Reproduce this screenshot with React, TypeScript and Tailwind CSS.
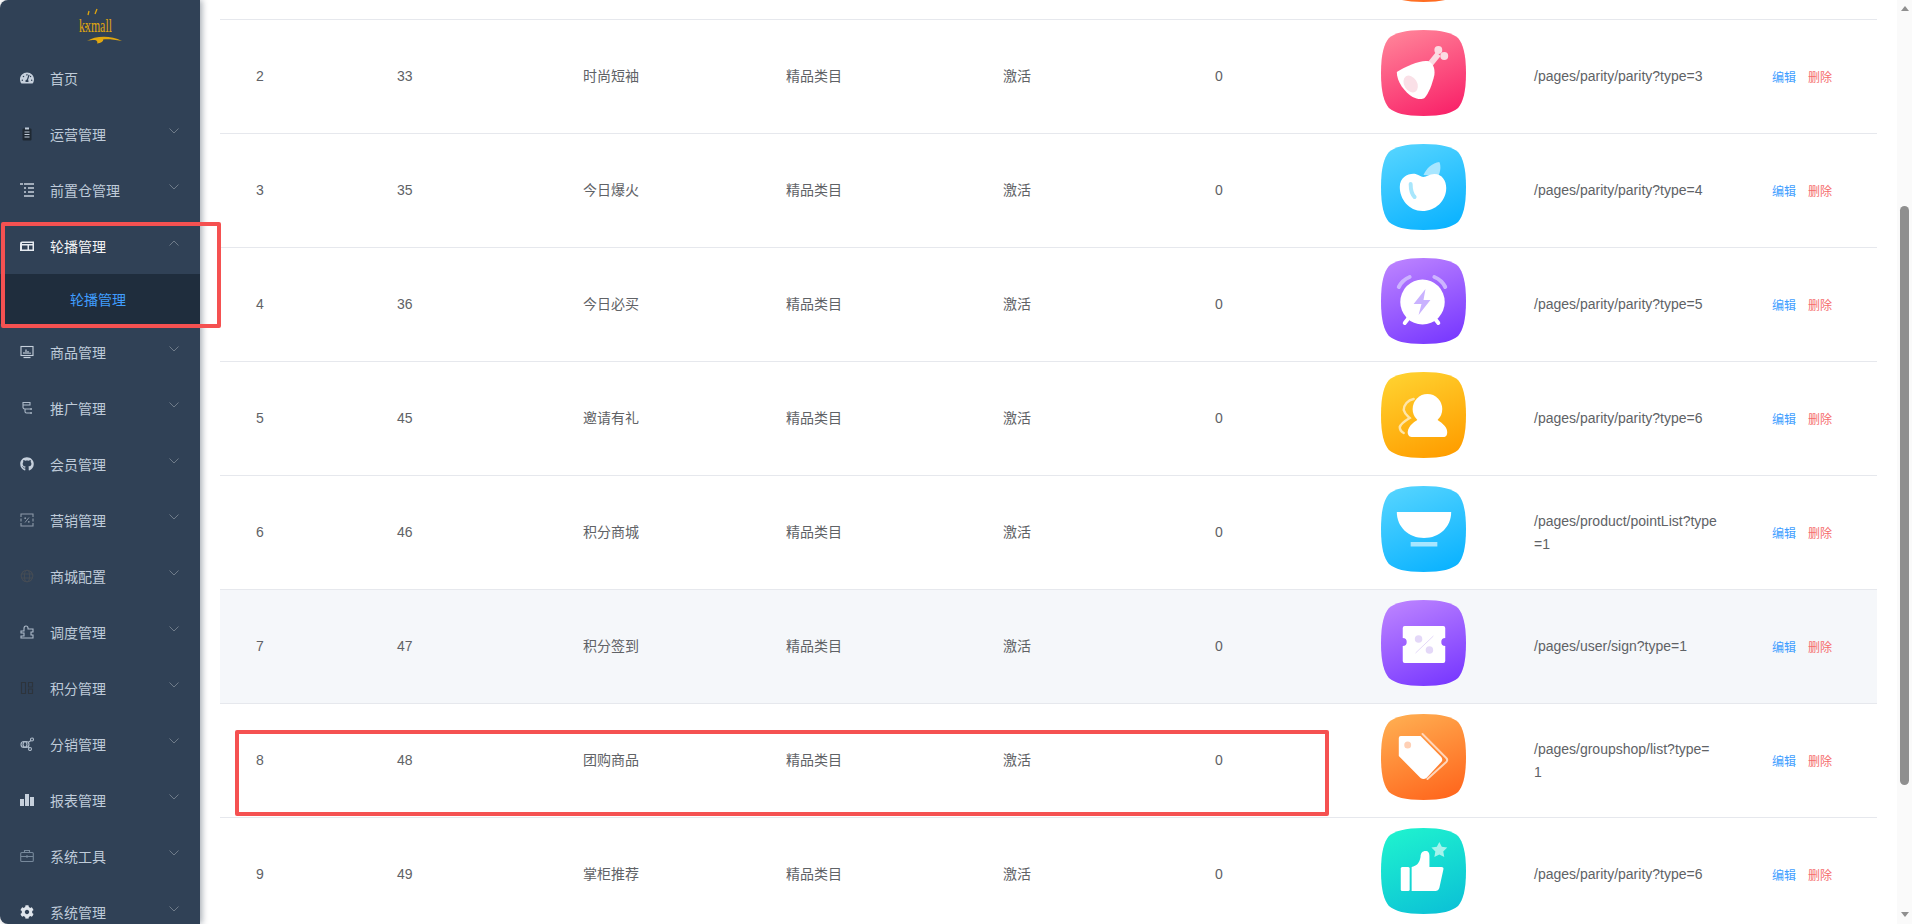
import { FaCog, FaGithub, FaTachometerAlt } from 'react-icons/fa';
import type { ReactNode } from 'react';

const SQUIRCLE =
  'M43 0C62 0 72 3 78 8 83 14 86 24 86 43 86 62 83 72 78 78 72 83 62 86 43 86 24 86 14 83 8 78 3 72 0 62 0 43 0 24 3 14 8 8 14 3 24 0 43 0Z';

function Squircle({ id, from, to, children }: { id: string; from: string; to: string; children?: ReactNode }) {
  return (
    <svg viewBox="0 0 86 86" preserveAspectRatio="none" className="block h-[86px] w-[85px]">
      <defs>
        <linearGradient id={id} x1="0.3" y1="0" x2="0.7" y2="1">
          <stop offset="0" stopColor={from} />
          <stop offset="1" stopColor={to} />
        </linearGradient>
      </defs>
      <path d={SQUIRCLE} fill={`url(#${id})`} />
      {children}
    </svg>
  );
}

const icons: Record<string, ReactNode> = {
  chicken: (
    <Squircle id="g-chicken" from="#ff8097" to="#f9246a">
      <path d="M49 35L58 24" stroke="#fbdbe2" strokeWidth="6" />
      <circle cx="58" cy="20" r="4" fill="#fbdbe2" />
      <circle cx="64" cy="26" r="4" fill="#fbdbe2" />
      <path d="M16 42C25 36 40 30 47 31 52 32 55 38 54 45 52 54 48 64 44 68 41 70 36 69 32 67 24 62 16 52 16 42Z" fill="#fff" />
      <ellipse cx="30" cy="54" rx="6.5" ry="9" transform="rotate(-32 30 54)" fill="#fae0e7" />
    </Squircle>
  ),
  apple: (
    <Squircle id="g-apple" from="#52d3ff" to="#0cb3ff">
      <path d="M43 31C46 24 52 19 59 18 61 22 60 28 58 32Z" fill="#a8e6ff" />
      <path d="M19 43C19 33 28 29 35 30 39 31 41 33 43 33 46 33 49 30 54 30 62 30 66 37 66 44 66 57 55 67 42 67 28 67 19 55 19 43Z" fill="#fff" />
      <path d="M30 40C30 45 31 50 34 53" fill="none" stroke="#a8e6fc" strokeWidth="4" strokeLinecap="round" />
    </Squircle>
  ),
  clock: (
    <Squircle id="g-clock" from="#b980ff" to="#7a3aff">
      <path d="M18 29C20 25 24 21 29 19M54 19C59 21 63 25 65 29" fill="none" stroke="#cdb4ff" strokeWidth="4" strokeLinecap="round" />
      <path d="M24 65L28 60M58 65L54 60" stroke="#fff" strokeWidth="4" strokeLinecap="round" />
      <circle cx="42" cy="44" r="22.5" fill="#fff" />
      <path d="M45 31L33 46H41L38 57 50 42H43Z" fill="#c9b2ff" />
    </Squircle>
  ),
  person: (
    <Squircle id="g-person" from="#ffd02e" to="#ff9e00">
      <path d="M33 27C27 28 23 33 23 38 24 42 27 44 29 46 24 49 20 52 19 55 19 58 21 60 23 61" fill="none" stroke="#ffe5a8" strokeWidth="2.5" strokeLinecap="round" />
      <circle cx="47" cy="37" r="15" fill="#fff" />
      <path d="M31 65C28 65 27 62 27 60 28 53 34 50 38 47H56C60 50 67 54 67 60 67 63 66 65 63 65Z" fill="#fff" />
    </Squircle>
  ),
  bowl: (
    <Squircle id="g-bowl" from="#52d3ff" to="#0cb3ff">
      <path d="M16 26H71C71 41 59 52 43.5 52 28 52 16 41 16 26Z" fill="#fff" />
      <rect x="30" y="56" width="27" height="4.5" fill="#a8e6ff" />
    </Squircle>
  ),
  ticket: (
    <Squircle id="g-ticket" from="#b980ff" to="#7a3aff">
      <path d="M24 26H63A2 2 0 0 1 65 28V38A4 4 0 0 0 65 46V61A2 2 0 0 1 63 63H24A2 2 0 0 1 22 61V46A4 4 0 0 0 22 38V28A2 2 0 0 1 24 26Z" fill="#fff" />
      <circle cx="38" cy="39" r="3.8" fill="#e4d8f8" />
      <circle cx="49" cy="50" r="3.8" fill="#e4d8f8" />
      <path d="M53 36L35 53" stroke="#e4d8f8" strokeWidth="1" />
    </Squircle>
  ),
  tag: (
    <Squircle id="g-tag" from="#ffab4f" to="#ff681e">
      <path d="M42 20L66 44Q68 46 66 48L47 65" fill="none" stroke="#ffd6bb" strokeWidth="2" strokeLinecap="round" />
      <path d="M20 22H40L61 43Q63 46 61 48L46 64Q43 66 40 64L18 42V24Q18 22 20 22Z" fill="#fff" />
      <circle cx="27" cy="31" r="3.5" fill="#ffd0b5" />
    </Squircle>
  ),
  thumb: (
    <Squircle id="g-thumb" from="#1ef0cf" to="#0cc3d6">
      <rect x="20" y="39" width="9" height="24" rx="1.5" fill="#fff" />
      <path d="M31 39C36 38 39 35 40 29 40 25 42 23 45 23 48 23 49 25 49 28V39H61Q64 39 63 42L59 60Q58 63 55 63H31Z" fill="#fff" />
      <path d="M59 14L61.5 18.8 67 19.6 63 23.4 64 29 59 26.4 54 29 55 23.4 51 19.6 56.5 18.8Z" fill="#a5f3ec" />
    </Squircle>
  ),
};

const rows = [
  { no: 2, id: 33, name: '时尚短袖', icon: 'chicken', url: '/pages/parity/parity?type=3' },
  { no: 3, id: 35, name: '今日爆火', icon: 'apple', url: '/pages/parity/parity?type=4' },
  { no: 4, id: 36, name: '今日必买', icon: 'clock', url: '/pages/parity/parity?type=5' },
  { no: 5, id: 45, name: '邀请有礼', icon: 'person', url: '/pages/parity/parity?type=6' },
  { no: 6, id: 46, name: '积分商城', icon: 'bowl', url: '/pages/product/pointList?type\n=1' },
  { no: 7, id: 47, name: '积分签到', icon: 'ticket', url: '/pages/user/sign?type=1' },
  { no: 8, id: 48, name: '团购商品', icon: 'tag', url: '/pages/groupshop/list?type=\n1' },
  { no: 9, id: 49, name: '掌柜推荐', icon: 'thumb', url: '/pages/parity/parity?type=6' },
];

const line = { fill: 'none', stroke: 'currentColor', strokeWidth: 1.1 };

const menu: { label: string; icon: ReactNode; color: string; noArrow?: boolean; open?: boolean }[] = [
  { label: '首页', icon: <FaTachometerAlt size={14} />, color: 'text-[#c6d0dc]', noArrow: true },
  {
    label: '运营管理',
    color: 'text-[#1f2933]',
    icon: (
      <svg viewBox="0 0 14 14" className="h-3.5 w-3.5">
        <rect x="2.5" y="1.5" width="9" height="12" rx="1" fill="currentColor" />
        <rect x="5" y="0.5" width="4" height="2" fill="#bfcbd9" />
        <path d="M4.5 5H9.5M4.5 7.5H9.5M4.5 10H9.5" stroke="#bfcbd9" strokeWidth="1" />
      </svg>
    ),
  },
  {
    label: '前置仓管理',
    color: 'text-[#c6d0dc]',
    icon: (
      <svg viewBox="0 0 14 14" className="h-3.5 w-3.5">
        <path d="M0 1H3M4 1H14M4 5H6M8 5H14M4 9H6M8 9H14M4 13H14" stroke="currentColor" strokeWidth="1.3" />
      </svg>
    ),
  },
  {
    label: '轮播管理',
    color: 'text-[#e6ebf1]',
    open: true,
    icon: (
      <svg viewBox="0 0 14 14" className="h-3.5 w-3.5">
        <path d="M2 2.5H14V12H0V4.5Q0 2.5 2 2.5Z" fill="currentColor" />
        <rect x="2" y="4" width="10.5" height="1" fill="#304156" />
        <rect x="2" y="6.5" width="5.5" height="4" fill="#304156" />
        <rect x="9" y="6.5" width="3.5" height="4" fill="#304156" />
      </svg>
    ),
  },
  {
    label: '商品管理',
    color: 'text-[#c6d0dc]',
    icon: (
      <svg viewBox="0 0 14 14" className="h-3.5 w-3.5">
        <rect x="1" y="1.5" width="12" height="9" {...line} />
        <path d="M4 9V7M6 9V4.5M8 9V6M10 9V7.5" stroke="currentColor" strokeWidth="1.2" />
        <path d="M3.5 12.5H10.5" stroke="currentColor" strokeWidth="1.2" />
      </svg>
    ),
  },
  {
    label: '推广管理',
    color: 'text-[#aebbca]',
    icon: (
      <svg viewBox="0 0 14 14" className="h-3.5 w-3.5">
        <path d="M3 1.5H10V4H3ZM3 4V6.5Q3 8 5 8H10M5 8V10.5Q5 12 6.5 12H10" {...line} />
        <circle cx="11" cy="8" r="1" fill="currentColor" />
        <circle cx="11" cy="12" r="1" fill="currentColor" />
      </svg>
    ),
  },
  { label: '会员管理', icon: <FaGithub size={14} />, color: 'text-[#c6d0dc]' },
  {
    label: '营销管理',
    color: 'text-[#8d9aa9]',
    icon: (
      <svg viewBox="0 0 14 14" className="h-3.5 w-3.5">
        <path d="M1 4V1H13V4M1 10V13H13V10M1 5.5V8.5M13 5.5V8.5" {...line} />
        <path d="M5 9.5L9 4.5" stroke="currentColor" strokeWidth="0.9" />
        <circle cx="5.2" cy="5.2" r="0.9" fill="currentColor" />
        <circle cx="8.8" cy="8.8" r="0.9" fill="currentColor" />
      </svg>
    ),
  },
  {
    label: '商城配置',
    color: 'text-[#454c55]',
    icon: (
      <svg viewBox="0 0 14 14" className="h-3.5 w-3.5">
        <circle cx="7" cy="7" r="5.8" {...line} />
        <ellipse cx="7" cy="7" rx="2.6" ry="5.8" {...line} />
        <path d="M1.5 5H12.5M1.5 9H12.5" {...line} />
      </svg>
    ),
  },
  {
    label: '调度管理',
    color: 'text-[#aebbca]',
    icon: (
      <svg viewBox="0 0 14 14" className="h-3.5 w-3.5">
        <path d="M1 6H4V3.5Q4 1 6 1 8 1 8 3V4H13V7H11V10H13V13H1V11H4V8H1Z" {...line} />
      </svg>
    ),
  },
  {
    label: '积分管理',
    color: 'text-[#2d343c]',
    icon: (
      <svg viewBox="0 0 14 14" className="h-3.5 w-3.5">
        <path d="M1.5 1.5H5.5V12.5H1.5ZM8.5 1.5H12.5V6H8.5ZM8.5 8H12.5V12.5H8.5Z" {...line} />
      </svg>
    ),
  },
  {
    label: '分销管理',
    color: 'text-[#aebbca]',
    icon: (
      <svg viewBox="0 0 14 14" className="h-3.5 w-3.5">
        <circle cx="4" cy="7.5" r="3" {...line} />
        <circle cx="6" cy="7.5" r="3" {...line} />
        <circle cx="12" cy="2.5" r="1.5" {...line} />
        <circle cx="10" cy="12" r="1.5" {...line} />
        <path d="M8 5.5L11 3.5M8 9.5L9.5 11" {...line} />
      </svg>
    ),
  },
  {
    label: '报表管理',
    color: 'text-[#c6d0dc]',
    icon: (
      <svg viewBox="0 0 14 14" className="h-3.5 w-3.5">
        <path d="M0 6H4V13H0ZM5 1H9V13H5ZM10 4H14V13H10Z" fill="currentColor" />
      </svg>
    ),
  },
  {
    label: '系统工具',
    color: 'text-[#76889b]',
    icon: (
      <svg viewBox="0 0 14 14" className="h-3.5 w-3.5">
        <rect x="0.7" y="3.5" width="12.6" height="9" rx="1" {...line} />
        <path d="M4.5 3.5V1.5H9.5V3.5M1 7.5H13" {...line} />
        <rect x="6" y="6.5" width="2" height="2" fill="currentColor" />
      </svg>
    ),
  },
  { label: '系统管理', icon: <FaCog size={14} />, color: 'text-[#dfe5ec]' },
];

function Chevron({ up }: { up?: boolean }) {
  return (
    <svg viewBox="0 0 10 6" className="mb-[6px] h-[6px] w-[10px] text-[#76828f]">
      <path d={up ? 'M0.5 5.5L5 1 9.5 5.5' : 'M0.5 0.5L5 5 9.5 0.5'} fill="none" stroke="currentColor" strokeWidth="0.9" />
    </svg>
  );
}

function Sidebar() {
  return (
    <aside className="relative z-10 flex h-full w-[200px] shrink-0 flex-col overflow-hidden rounded-l-[8px] bg-[#304156] shadow-[2px_0_6px_rgba(0,21,41,0.35)]">
      <div className="flex h-[50px] shrink-0 justify-center">
        <div className="relative h-[50px] w-[60px]">
          <span className="absolute left-[9px] top-[16px] origin-left scale-x-[0.66] font-['Liberation_Serif',serif] text-[18px] leading-[20px] text-[#e0a60f]">
            kxmall
          </span>
          <svg viewBox="0 0 60 50" className="absolute inset-0 h-[50px] w-[60px]">
            <path d="M18 15L19 11M25 14L27 9" stroke="#e0a60f" strokeWidth="1.3" />
            <circle cx="16" cy="27" r="1" fill="#e0a60f" />
            <path d="M17 41C25 36 40 35 52 41 42 39 37 39 33 39.5 34 41 31 43 27 43.5 28 42 27 40.5 25 40 22 40 19 40 17 41Z" fill="#e0a60f" />
          </svg>
        </div>
      </div>
      {menu.map((item) => (
        <div key={item.label} className="shrink-0">
          <div className="flex h-14 items-center pl-5 pr-[21px]">
            <span className={`flex h-3.5 w-3.5 ${item.color}`}>{item.icon}</span>
            <span className={`ml-4 mt-[2px] flex-1 text-sm ${item.open ? 'text-[#f4f4f5]' : 'text-[#bfcbd9]'}`}>{item.label}</span>
            {!item.noArrow && <Chevron up={item.open} />}
          </div>
          {item.open && (
            <div className="flex h-[50px] items-center bg-[#1f2d3d] pl-[70px] pt-[2px] text-sm text-[#409eff]">轮播管理</div>
          )}
        </div>
      ))}
    </aside>
  );
}

function Row({ row }: { row: (typeof rows)[number] }) {
  return (
    <tr className={`h-[114px] [&>td]:border-b [&>td]:border-[#e6e8ed] ${row.no === 7 ? 'bg-[#f5f7fa]' : ''}`}>
      <td className="pb-[2px] pl-9">{row.no}</td>
      <td className="pb-[2px] pl-[11px]">{row.id}</td>
      <td className="pb-[2px] pl-2.5">{row.name}</td>
      <td className="pb-[2px] pl-2.5">精品类目</td>
      <td className="pb-[2px] pl-2.5">激活</td>
      <td className="pb-[2px] pl-2.5">0</td>
      <td className="pb-[8px] pl-2.5">{icons[row.icon]}</td>
      <td className="pl-2.5">
        <div className="whitespace-pre-line leading-[23px]">{row.url}</div>
      </td>
      <td className="pl-[9px]">
        <span className="text-xs text-[#409eff]">编辑</span>
        <span className="ml-[12px] text-xs text-[#f56c6c]">删除</span>
      </td>
    </tr>
  );
}

function Scrollbar() {
  return (
    <div className="flex h-full w-[15px] shrink-0 flex-col items-center bg-[#fafafa]">
      <div className="mt-[6px] h-0 w-0 border-x-[4.5px] border-b-[5px] border-x-transparent border-b-[#8f8f8f]" />
      <div className="mt-[195px] h-[579px] w-[9px] rounded-[5px] bg-[#8f8f8f]" />
      <div className="mt-[127px] h-0 w-0 border-x-[4.5px] border-t-[5px] border-x-transparent border-t-[#8f8f8f]" />
    </div>
  );
}

export default function App() {
  return (
    <div className="flex h-[924px] w-[1912px] overflow-hidden bg-white font-['Liberation_Sans','Noto_Sans_CJK_SC',sans-serif] text-sm text-[#606266]">
      <Sidebar />
      <main className="relative min-w-0 flex-1 overflow-hidden px-5">
        <div className="relative h-5 overflow-hidden border-b border-[#e6e8ed]">
          <div className="absolute left-[1161px] top-[-84px]">
            <Squircle id="g-top" from="#ffab4f" to="#ff681e" />
          </div>
        </div>
        <table className="w-[1657px] table-fixed border-separate border-spacing-0">
          <colgroup>
            <col className="w-[166px]" />
            <col className="w-[187px]" />
            <col className="w-[203px]" />
            <col className="w-[217px]" />
            <col className="w-[212px]" />
            <col className="w-[166px]" />
            <col className="w-[153px]" />
            <col className="w-[239px]" />
            <col className="w-[114px]" />
          </colgroup>
          <tbody>
            {rows.map((row) => (
              <Row key={row.no} row={row} />
            ))}
          </tbody>
        </table>
        {/* annotation boxes drawn on top of the screenshot */}
        <div className="absolute left-[35px] top-[730px] h-[86px] w-[1094px] rounded-[2px] border-4 border-[#f55151]" />
      </main>
      <Scrollbar />
      <div className="absolute left-px top-[222px] z-20 h-[106px] w-[220px] rounded-[2px] border-4 border-[#f55151]" />
    </div>
  );
}
